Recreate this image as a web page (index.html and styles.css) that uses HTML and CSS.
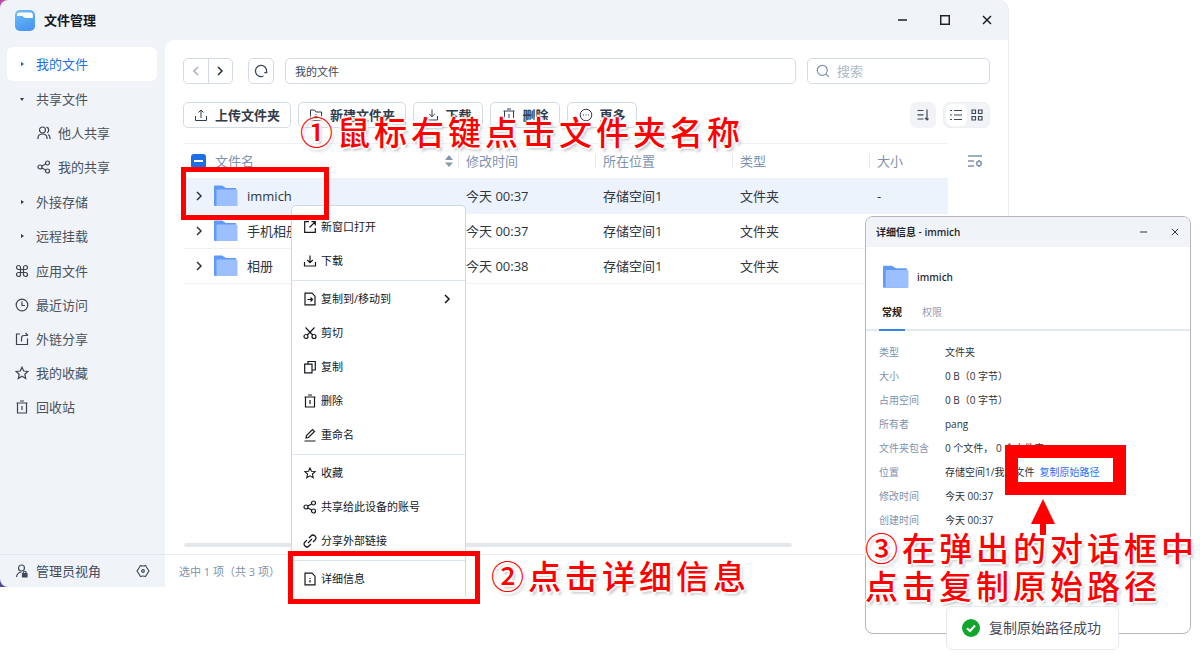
FILE: index.html
```html
<!DOCTYPE html>
<html lang="zh-CN">
<head>
<meta charset="utf-8">
<title>文件管理</title>
<link rel="stylesheet" href="styles.css">
</head>
<body>
<svg class="defs" aria-hidden="true">
  <defs>
    <linearGradient id="app" x1="0" y1="0" x2="0.4" y2="1"><stop offset="0" stop-color="#6cc2fa"/><stop offset="1" stop-color="#4a97f2"/></linearGradient>
    <symbol id="i-folder" viewBox="0 0 24 22"><path d="M0 1.5Q0 .5 1 .5H8L12 3H22V21H1Q0 21 0 20Z" fill="#5f9af8"/><path d="M3.500 4.500H22.500Q23.500 4.500 23.500 5.500V21H2.500V5.500Q2.500 4.500 3.500 4.500Z" fill="#9cbfff"/></symbol>
    <symbol id="i-share" viewBox="0 0 14 14"><circle cx="3" cy="7" r="2"/><circle cx="10.500" cy="3" r="2"/><circle cx="10.500" cy="11" r="2"/><path d="M4.800 6 8.700 4M4.800 8 8.700 10"/></symbol>
    <symbol id="i-trash" viewBox="0 0 14 14"><path d="M1.500 3H12.500M5 1H9M2.500 3V13H11.500V3M7 6V10"/></symbol>
    <symbol id="i-star" viewBox="0 0 14 14"><path d="M7 1.200 8.700 5 12.900 5.400 9.800 8.200 10.700 12.500 7 10.300 3.300 12.500 4.200 8.200 1.100 5.400 5.300 5Z"/></symbol>
    <symbol id="i-download" viewBox="0 0 14 14"><path d="M1.500 8V12H12.500V8M7 1.500V8.500M4.200 6 7 8.700 9.800 6"/></symbol>
    <symbol id="i-right" viewBox="0 0 10 10"><path d="M3 1 7 5 3 9"/></symbol>
    <symbol id="i-close" viewBox="0 0 10 10"><path d="M1 1 9 9M9 1 1 9"/></symbol>
    <symbol id="i-min" viewBox="0 0 10 10"><path d="M0 5H9"/></symbol>
  </defs>
</svg>

<div class="desktop">
  <div class="window">
    <header class="titlebar">
      <svg class="logo" viewBox="0 0 20 21"><rect width="20" height="21" rx="5" fill="url(#app)"/><path d="M2 4.500Q2 2.500 4 2.500H15.500Q17.800 2.500 17.800 4.500V8H11Q9.500 8 8.500 7L7.500 6H2Z" fill="#fff"/></svg>
      <h1>文件管理</h1>
      <div class="window-controls">
        <button type="button" aria-label="最小化"><svg class="icon s10"><use href="#i-min"/></svg></button>
        <button type="button" aria-label="最大化"><svg class="icon s10" viewBox="0 0 10 10"><rect x=".7" y=".7" width="8.600" height="8.600"/></svg></button>
        <button type="button" aria-label="关闭"><svg class="icon s10"><use href="#i-close"/></svg></button>
      </div>
    </header>

    <div class="body">
      <nav class="sidebar">
        <ul class="nav-group">
          <li><a href="#mine" class="nav-item active"><span class="nav-icon caret"></span>我的文件</a></li>
          <li><a href="#shared" class="nav-item"><span class="nav-icon caret open"></span>共享文件</a></li>
          <li><a href="#others" class="nav-item child"><span class="nav-icon"><svg class="icon s14" viewBox="0 0 14 14"><circle cx="5.500" cy="4" r="3"/><path d="M1 13V11.500Q1.500 8 5.500 8T10 11.500V13M9.500 1.200A3 3 0 0 1 10 6.800M11 8.500Q13 9.500 13 12V13"/></svg></span>他人共享</a></li>
          <li><a href="#myshare" class="nav-item child"><span class="nav-icon"><svg class="icon s14"><use href="#i-share"/></svg></span>我的共享</a></li>
        </ul>
        <ul class="nav-group">
          <li><a href="#ext" class="nav-item"><span class="nav-icon caret"></span>外接存储</a></li>
          <li><a href="#remote" class="nav-item"><span class="nav-icon caret"></span>远程挂载</a></li>
        </ul>
        <ul class="nav-group">
          <li><a href="#apps" class="nav-item"><span class="nav-icon"><svg class="icon s14" viewBox="0 0 14 14"><path d="M5.500 5.500H3.500A2 2 0 1 1 5.500 3.500ZM8.500 5.500V3.500A2 2 0 1 1 10.500 5.500ZM5.500 8.500V10.500A2 2 0 1 1 3.500 8.500ZM8.500 8.500H10.500A2 2 0 1 1 8.500 10.500ZM5.500 5.500H8.500V8.500H5.500Z"/></svg></span>应用文件</a></li>
          <li><a href="#recent" class="nav-item"><span class="nav-icon"><svg class="icon s14" viewBox="0 0 14 14"><circle cx="7" cy="7" r="5.800"/><path d="M7 3.500V7.500H10"/></svg></span>最近访问</a></li>
          <li><a href="#links" class="nav-item"><span class="nav-icon"><svg class="icon s14" viewBox="0 0 14 14"><path d="M5 2H1.500V12.500H12.500V6.500M6.500 9.500V6Q6.500 3.500 9 3.500H12.500M10.500 1 13 3.500"/></svg></span>外链分享</a></li>
          <li><a href="#fav" class="nav-item"><span class="nav-icon"><svg class="icon s14"><use href="#i-star"/></svg></span>我的收藏</a></li>
          <li><a href="#trash" class="nav-item"><span class="nav-icon"><svg class="icon s14"><use href="#i-trash"/></svg></span>回收站</a></li>
        </ul>
        <div class="sidebar-footer">
          <a href="#admin" class="admin"><svg class="icon s14" viewBox="0 0 14 14"><circle cx="6.500" cy="4" r="3"/><path d="M1.500 13Q2 8.500 6.500 8"/><path d="M7.500 9.500H12V13H7.500Z" fill="currentColor"/><path d="M8.500 9.500V8Q9.800 6.500 11 8V9.500"/></svg>管理员视角</a>
          <button type="button" class="plain" aria-label="设置"><svg class="icon s14" viewBox="0 0 14 14"><path d="M4.500 1.500Q7 2.500 9.500 1.500L10.700 3.500 13 7 10.700 10.500 9.500 12.500Q7 11.500 4.500 12.500L3.300 10.500 1 7 3.300 3.500Z" stroke-linejoin="round"/><circle cx="7" cy="7" r="1.300"/></svg></button>
        </div>
      </nav>

      <main class="main">
        <div class="content">
          <div class="bar">
            <div class="history">
              <button type="button" aria-label="后退" disabled><svg class="icon s10 flip"><use href="#i-right"/></svg></button>
              <button type="button" aria-label="前进"><svg class="icon s10"><use href="#i-right"/></svg></button>
            </div>
            <button type="button" class="refresh" aria-label="刷新"><svg class="icon s14" viewBox="0 0 14 14"><path d="M9.500 12A5.600 5.600 0 1 1 12.600 7.500V9M10.300 8.700H13.300"/></svg></button>
            <input class="path" type="text" value="我的文件" aria-label="路径">
            <label class="search"><svg class="icon s14" viewBox="0 0 14 14"><circle cx="6.300" cy="6.300" r="5"/><path d="M10 10 12.800 12.800"/></svg><input type="search" placeholder="搜索" aria-label="搜索"></label>
          </div>
          <div class="bar actions">
            <button type="button" class="action"><svg class="icon s14" viewBox="0 0 14 14"><path d="M1.500 8V12.500H12.500V8M7 10V2.500M4.500 4.500 7 2 9.500 4.500"/></svg>上传文件夹</button>
            <button type="button" class="action"><svg class="icon s14" viewBox="0 0 14 14"><path d="M1.500 2H5.500L7 4H12.500V12.500H1.500ZM7 6V10.500M4.800 8.200H9.200"/></svg>新建文件夹</button>
            <button type="button" class="action"><svg class="icon s14"><use href="#i-download"/></svg>下载</button>
            <button type="button" class="action"><svg class="icon s14"><use href="#i-trash"/></svg>删除</button>
            <button type="button" class="action"><svg class="icon s14" viewBox="0 0 14 14"><circle cx="7" cy="7" r="5.800"/><path d="M4 7H5M6.500 7H7.500M9 7H10"/></svg>更多</button>
            <button type="button" class="sort" aria-label="排序"><svg class="icon s14" viewBox="0 0 14 14"><path d="M1.500 2.500H7.500M1.500 6.800H7.500M1.500 11H7.500M11 1.500V12M9 9.800 11 12 12.500 10.500"/></svg></button>
            <div class="views">
              <button type="button" class="on" aria-label="列表"><svg class="icon s14" viewBox="0 0 14 14"><path d="M1 2.500H3M5 2.500H13M1 7H3M5 7H13M1 11.500H3M5 11.500H13"/></svg></button>
              <button type="button" aria-label="网格"><svg class="icon s14" viewBox="0 0 14 14"><path d="M2 2H5.500V5.500H2ZM8.500 2H12V5.500H8.500ZM2 8.500H5.500V12H2ZM8.500 8.500H12V12H8.500Z"/></svg></button>
            </div>
          </div>
          <div class="listing">
            <table class="files">
              <colgroup><col><col class="c-mid"><col class="c-mid"><col class="c-mid"><col class="c-size"></colgroup>
              <thead>
                <tr>
                  <th><div class="head-name"><input type="checkbox" class="check" aria-label="全选">文件名<svg class="sorter" viewBox="0 0 8 12"><path d="M0 5 4 0 8 5ZM0 7.500 4 12 8 7.500Z"/></svg></div></th>
                  <th><span class="head">修改时间</span></th>
                  <th><span class="head">所在位置</span></th>
                  <th><span class="head">类型</span></th>
                  <th><span class="head">大小</span></th>
                </tr>
              </thead>
              <tbody>
                <tr class="selected"><td><div class="name"><svg class="icon s10"><use href="#i-right"/></svg><svg class="folder"><use href="#i-folder"/></svg>immich</div></td><td>今天 00:37</td><td>存储空间1</td><td>文件夹</td><td>-</td></tr>
                <tr><td><div class="name"><svg class="icon s10"><use href="#i-right"/></svg><svg class="folder"><use href="#i-folder"/></svg>手机相册</div></td><td>今天 00:37</td><td>存储空间1</td><td>文件夹</td><td></td></tr>
                <tr><td><div class="name"><svg class="icon s10"><use href="#i-right"/></svg><svg class="folder"><use href="#i-folder"/></svg>相册</div></td><td>今天 00:38</td><td>存储空间1</td><td>文件夹</td><td></td></tr>
              </tbody>
            </table>
            <button type="button" class="plain columns" aria-label="列设置"><svg class="icon s16" viewBox="0 0 16 14"><path d="M1 2H15M1 7H7M1 12H7"/><circle cx="12" cy="9.500" r="2.300"/><path d="M12 6V7M12 12V13"/></svg></button>
          </div>
          <div class="scrollbar"></div>
        </div>
        <footer class="status">选中 1 项（共 3 项）</footer>
      </main>
    </div>
  </div>

  <div class="menu" role="menu">
    <button type="button" role="menuitem"><svg class="icon s14" viewBox="0 0 14 14"><path d="M6 1.700H1.700V12.300H12.300V8M8.500 1.700H12.300V5.500M12.300 1.700 6.500 7.500"/></svg>新窗口打开</button>
    <button type="button" role="menuitem"><svg class="icon s14"><use href="#i-download"/></svg>下载</button>
    <hr>
    <button type="button" role="menuitem"><svg class="icon s14" viewBox="0 0 14 14"><path d="M2 1.200H9L12 4.200V12.800H2ZM4.500 7.500H9.500M7.500 5.500 9.500 7.500 7.500 9.500"/></svg>复制到/移动到<svg class="icon s10 more"><use href="#i-right"/></svg></button>
    <button type="button" role="menuitem"><svg class="icon s14" viewBox="0 0 14 14"><circle cx="3" cy="10.500" r="2"/><circle cx="11" cy="10.500" r="2"/><path d="M2.500 1.500 9.700 9M11.500 1.500 4.300 9"/></svg>剪切</button>
    <button type="button" role="menuitem"><svg class="icon s14" viewBox="0 0 14 14"><path d="M1.700 4.200H9V12.800H1.700ZM5 4V1.500H12.300V10H9.200"/></svg>复制</button>
    <button type="button" role="menuitem"><svg class="icon s14"><use href="#i-trash"/></svg>删除</button>
    <button type="button" role="menuitem"><svg class="icon s14" viewBox="0 0 14 14"><path d="M1.500 13H12.500M3 10 3.500 7.500 9.500 1.500 11.500 3.500 5.500 9.500Z"/></svg>重命名</button>
    <hr>
    <button type="button" role="menuitem"><svg class="icon s14" viewBox="-1 -1 16 16"><use href="#i-star" width="14" height="14"/></svg>收藏</button>
    <button type="button" role="menuitem"><svg class="icon s14"><use href="#i-share"/></svg>共享给此设备的账号</button>
    <button type="button" role="menuitem"><svg class="icon s14" viewBox="0 0 14 14"><path d="M6 4 8 2A2.800 2.800 0 0 1 12 6L10 8M8 10 6 12A2.800 2.800 0 0 1 2 8L4 6M5 9 9 5"/></svg>分享外部链接</button>
    <hr>
    <button type="button" role="menuitem"><svg class="icon s14" viewBox="0 0 14 14"><path d="M2 1.200H9L12 4.200V12.800H2ZM7 6V7M7 8V10.500"/></svg>详细信息</button>
  </div>

  <section class="dialog" role="dialog" aria-labelledby="dialog-title">
    <header class="dialog-head">
      <h2 id="dialog-title">详细信息 - immich</h2>
      <button type="button" class="plain" aria-label="最小化"><svg class="icon s8"><use href="#i-min"/></svg></button>
      <button type="button" class="plain" aria-label="关闭"><svg class="icon s8"><use href="#i-close"/></svg></button>
    </header>
    <div class="subject"><svg class="folder big"><use href="#i-folder"/></svg>immich</div>
    <div class="tabs" role="tablist">
      <button type="button" role="tab" aria-selected="true">常规</button>
      <button type="button" role="tab" aria-selected="false">权限</button>
    </div>
    <dl class="facts">
      <dt>类型</dt><dd>文件夹</dd>
      <dt>大小</dt><dd>0 B（0 字节）</dd>
      <dt>占用空间</dt><dd>0 B（0 字节）</dd>
      <dt>所有者</dt><dd>pang</dd>
      <dt>文件夹包含</dt><dd>0 个文件， 0 个文件夹</dd>
      <dt>位置</dt><dd>存储空间1/我的文件<a href="#copy">复制原始路径</a></dd>
      <dt>修改时间</dt><dd>今天 00:37</dd>
      <dt>创建时间</dt><dd>今天 00:37</dd>
    </dl>
  </section>

  <div class="toast" role="status"><svg class="ok" viewBox="0 0 18 18"><circle cx="9" cy="9" r="9" fill="#12a52c"/><path d="M5 9.200 8 12 13 6.500" fill="none" stroke="#fff" stroke-width="2"/></svg>复制原始路径成功</div>

  <div class="mark mark-name"></div>
  <div class="mark mark-info"></div>
  <div class="mark mark-path"></div>
  <svg class="arrow" viewBox="0 0 24 36"><path d="M12 0 24 25H15V36H9V25H0Z" fill="#f00"/></svg>
  <p class="note note-1">①鼠标右键点击文件夹名称</p>
  <p class="note note-2">②点击详细信息</p>
  <p class="note note-3">③在弹出的对话框中<br>点击复制原始路径</p>
</div>
</body>
</html>
```

FILE: styles.css
```css
* { box-sizing: border-box; }

body {
  margin: 0;
  background: #fff;
  color: #2b3138;
  font: 13px/18px "Open Sans", "Noto Sans CJK SC", sans-serif;
}

h1, h2, p, ul, dl, dd { margin: 0; padding: 0; }
ul { list-style: none; }
a { color: inherit; text-decoration: none; }
button, input { font: inherit; color: inherit; }
button { border: 0; padding: 0; background: none; display: flex; align-items: center; justify-content: center; }

.defs { position: absolute; width: 0; height: 0; }
.icon { flex: none; fill: none; stroke: currentColor; stroke-width: 1.2; }
.s8 { width: 8px; height: 8px; }
.s10 { width: 10px; height: 10px; stroke-width: 1.5; }
.s14 { width: 14px; height: 14px; }
.s16 { width: 16px; height: 14px; stroke-width: 1.5; }
.flip { transform: scaleX(-1); }
.folder { flex: none; width: 24px; height: 22px; }
.folder.big { width: 26px; height: 24px; }

.desktop {
  position: relative;
  min-height: 100vh;
  padding-right: 191px;
}

.window {
  display: flex;
  flex-direction: column;
  min-height: calc(100vh - 71px);
  border-right: 1px solid #e8ebef;
  border-radius: 8px 10px 0 8px;
  background: #f0f3f8;
  overflow: hidden;
}

.desktop::before {
  content: "";
  position: absolute;
  z-index: -1;
  left: 0;
  top: 0;
  width: 8px;
  height: calc(100vh - 71px);
  background: linear-gradient(#b64aa6, #b64aa6 20%, #4a4a9c 80%);
}

.titlebar { display: flex; align-items: center; gap: 9px; height: 40px; padding-left: 15px; }
.titlebar h1 { flex: 1; font-size: 13px; font-weight: 600; color: #16191d; }
.logo { width: 20px; height: 21px; }
.window-controls { display: flex; color: #1d2024; }
.window-controls button { width: 42px; height: 30px; }

.body { flex: 1; display: flex; }

.sidebar { flex: none; width: 165px; display: flex; flex-direction: column; gap: 1px; padding-top: 7px; color: #4a525c; }
.nav-group { padding: 0 8px 0 7px; }
.nav-item { display: flex; align-items: center; gap: 7px; height: 34px; padding-left: 8px; border-radius: 6px; }
.nav-item.child { padding-left: 30px; }
.nav-item.active { margin-bottom: 1px; background: #fff; color: #1d6fe0; }
.nav-icon { flex: none; width: 14px; height: 14px; color: #3d444d; }
.nav-icon svg { display: block; }
.caret { display: grid; place-items: center; color: #333b45; }
.active .caret { color: #1458bd; }
.caret::before { content: ""; border: 2px solid transparent; border-left: 3px solid currentColor; border-right: 0; }
.caret.open::before { border: 2px solid transparent; border-top: 3px solid currentColor; border-bottom: 0; }

.sidebar-footer { margin-top: auto; display: flex; align-items: center; justify-content: space-between; height: 33px; padding: 0 15px; border-top: 1px solid #e0e6ee; color: #3d4b60; }
.admin { display: flex; align-items: center; gap: 7px; }

.main { flex: 1; min-width: 0; display: flex; flex-direction: column; background: #fff; border-top-left-radius: 10px; }
.content { flex: 1; display: flex; flex-direction: column; padding: 18px 18px 7px; }
.bar { display: flex; align-items: center; height: 26px; margin-bottom: 18px; }
.history, .refresh, .path, .search, .action { height: 26px; border: 1px solid #d3dbe5; border-radius: 5px; background: #fff; }
.history { display: flex; width: 50px; margin-right: 15px; color: #24303f; }
.history button { flex: 1; }
.history button + button { border-left: 1px solid #d3dbe5; }
.history button:disabled { color: #a3afbf; }
.refresh { width: 26px; margin-right: 11px; color: #3a475a; }
.path { flex: 1; min-width: 0; padding: 0 9px; font-size: 11px; margin-right: 11px; color: #3c444f; }
.search { display: flex; align-items: center; gap: 7px; width: 183px; padding: 0 8px; color: #7f93ad; }
.search input { flex: 1; min-width: 0; border: 0; padding: 0; background: none; outline: 0; }
.search input::placeholder { color: #adb9c9; opacity: 1; }

.bar.actions { gap: 7px; margin-bottom: 15px; }
.action { gap: 7px; min-width: 70px; padding: 0 10px; font-weight: 600; color: #303b4c; white-space: nowrap; }
.action .icon { stroke-width: 1; }
.sort { width: 26px; height: 26px; margin-left: auto; border-radius: 6px; background: #f1f3f6; color: #3e4a5c; }
.views { display: flex; align-items: center; width: 47px; height: 26px; padding: 0 2px; border: 1px solid #eceff3; border-radius: 7px; background: #f1f3f6; color: #3e4a5c; }
.views button { flex: 1; height: 22px; border-radius: 6px; }
.views .on { background: #fff; }

.listing { display: flex; align-items: flex-start; gap: 19px; padding-left: 1px; padding-right: 7px; }
.files { flex: 1; table-layout: fixed; border-collapse: collapse; color: #2f363e; }
.c-mid { width: 137px; }
.c-size { width: 79px; }
.files tr { height: 35px; border-top: 1px solid #edf1f6; }
.files tbody tr:last-child { border-bottom: 1px solid #edf1f6; }
.files th { padding: 0; font-weight: 400; text-align: left; color: #7e92ad; }
.files td { padding: 0 0 0 8px; white-space: nowrap; }
.files td:first-child { padding-left: 10px; }
.head { display: block; padding-left: 7px; border-left: 1px solid #e4eaf1; line-height: 14px; }
.head-name { display: flex; align-items: center; gap: 9px; padding: 0 5px 0 7px; }
.sorter { width: 8px; height: 12px; margin-left: auto; fill: #8497b0; }
.check { appearance: none; display: grid; place-items: center; width: 15px; height: 15px; margin: 0; border-radius: 3px; background: #1c6fe3; }
.check::before { content: ""; width: 9px; height: 2px; background: #fff; }
.name { display: flex; align-items: center; color: #2f363e; }
.name .folder { margin: 0 9px 0 10px; }
.selected { background: #edf3fc; }
.columns { margin-top: 11px; color: #7f93ad; }
.scrollbar { width: 608px; max-width: 100%; height: 4px; margin: auto 0 0 1px; border-radius: 2px; background: #e4e8ed; }
.status { height: 33px; padding: 0 14px; border-top: 1px solid #e6ecf3; font-size: 11px; line-height: 34px; color: #7e92ad; }

.menu { position: absolute; left: 291px; top: 205px; width: 175px; padding: 4px 0 0; border: 1px solid #cfd8e5; border-bottom: 0; border-radius: 5px 5px 0 0; background: #fff; color: #14181d; font-size: 11px; }
.menu button { width: 100%; height: 34px; gap: 4px; padding: 0 13px 0 11px; justify-content: flex-start; }
.menu .more { margin-left: auto; }
.menu hr { height: 1px; margin: 2px 0 1px; border: 0; background: #dce4ee; }

.dialog { position: absolute; right: 9px; top: 216px; width: 326px; height: 418px; border: 1px solid #b9b2b8; border-radius: 8px; background: #fff; font-size: 10px; line-height: 16px; overflow: hidden; }
.dialog-head { display: flex; align-items: center; gap: 23px; height: 30px; padding: 0 11px 0 10px; background: #f0f3f8; }
.dialog-head h2 { flex: 1; font-size: 10px; font-weight: 600; color: #23282f; }
.subject { display: flex; align-items: center; gap: 8px; padding: 18px 17px 0; font-weight: 600; }
.tabs { display: flex; gap: 14px; padding: 12px 13px 0; border-bottom: 2px solid #e1e9f2; color: #8ea0b8; }
.tabs button { height: 30px; margin-bottom: -2px; padding: 0 3px 6px; border-bottom: 2px solid transparent; }
.tabs button[aria-selected="true"] { border-color: #3c82e8; font-weight: 700; color: #17191c; }
.facts { display: grid; grid-template-columns: 66px 1fr; row-gap: 8px; padding: 13px; }
.facts dt { color: #8093ae; }
.facts dd { white-space: nowrap; }
.facts a { margin-left: 5px; color: #1d6ff0; }

.toast { position: absolute; right: 81px; top: 606px; display: flex; align-items: center; gap: 9px; width: 173px; height: 44px; padding: 0 15px; border: 1px solid #e6eaf1; border-radius: 6px; background: #fff; font-size: 14px; color: #44495a; white-space: nowrap; }
.ok { flex: none; width: 18px; height: 18px; }

.mark { position: absolute; border: 5px solid #f00; }
.mark-name { left: 181px; top: 167px; width: 148px; height: 53px; }
.mark-info { left: 288px; top: 551px; width: 192px; height: 53px; }
.mark-path { right: 74px; top: 445px; width: 121px; height: 50px; border-width: 13px; }
.arrow { position: absolute; right: 145px; top: 499px; width: 24px; height: 36px; }

.note { position: absolute; font-size: 33px; line-height: 38px; letter-spacing: 4px; white-space: nowrap; color: #f00; font-family: "Noto Sans CJK SC", sans-serif; font-weight: 500; text-shadow: 2px 0 1px #fff, -2px 0 1px #fff, 0 2px 1px #fff, 0 -2px 1px #fff, 2px 3px 3px #bbb; }
.note-1 { left: 300px; top: 112px; }
.note-2 { left: 491px; top: 556px; }
.note-3 { left: 865px; top: 528px; }
```
